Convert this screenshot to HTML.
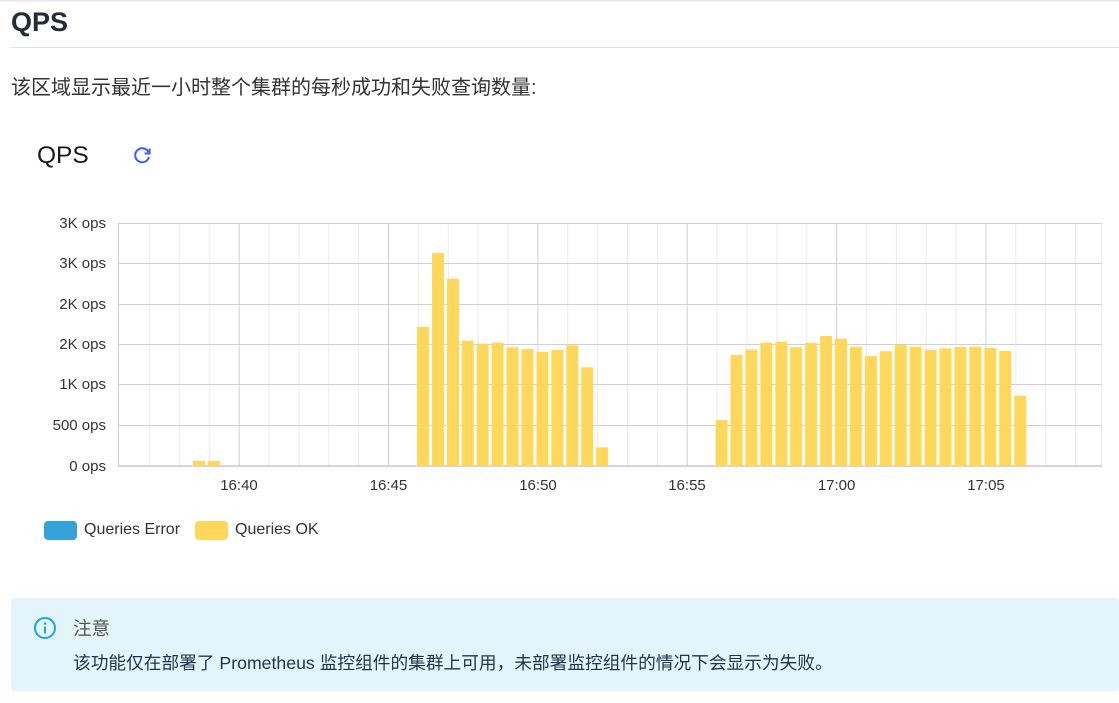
<!DOCTYPE html>
<html><head><meta charset="utf-8"><style>
body{margin:0;width:1119px;height:703px;overflow:hidden;background:#fff;font-family:"Liberation Sans","Noto Sans CJK SC",sans-serif;position:relative}
.a{position:absolute;white-space:nowrap}
</style></head><body>
<div class="a" style="left:0;top:0;width:1119px;height:3px;background:linear-gradient(#e6e6e6,#fff)"></div>
<div class="a" style="left:11px;top:4px;font-size:27px;font-weight:bold;color:#262b36;line-height:36px">QPS</div>
<div class="a" style="left:11px;top:47px;width:1108px;height:1px;background:#dde2ea"></div>
<div class="a" style="left:11px;top:75px;font-size:20px;color:#333;line-height:26px">该区域显示最近一小时整个集群的每秒成功和失败查询数量:</div>
<div class="a" style="left:37px;top:141px;font-size:24.5px;color:#1a1a1a;line-height:30px">QPS</div>
<svg class="a" style="left:131px;top:144px" width="22" height="22" viewBox="0 0 22 22"><path d="M17.5 8.2A7 7 0 1 0 18 13" fill="none" stroke="#3d5cfb" stroke-width="2"/><path d="M18.6 4.5v5h-5" fill="none" stroke="#3d5cfb" stroke-width="2"/></svg>
<svg class="a" style="left:0;top:200px" width="1119" height="300" viewBox="0 200 1119 300" font-family="Liberation Sans,sans-serif" font-size="15" fill="#333">
<g stroke="#ebebeb" stroke-width="1">
<line x1="149.5" y1="223" x2="149.5" y2="466"/><line x1="179.4" y1="223" x2="179.4" y2="466"/><line x1="209.3" y1="223" x2="209.3" y2="466"/>
<line x1="269" y1="223" x2="269" y2="466"/><line x1="298.9" y1="223" x2="298.9" y2="466"/><line x1="328.8" y1="223" x2="328.8" y2="466"/><line x1="358.6" y1="223" x2="358.6" y2="466"/>
<line x1="418.4" y1="223" x2="418.4" y2="466"/><line x1="448.3" y1="223" x2="448.3" y2="466"/><line x1="478.1" y1="223" x2="478.1" y2="466"/><line x1="508" y1="223" x2="508" y2="466"/>
<line x1="567.8" y1="223" x2="567.8" y2="466"/><line x1="597.6" y1="223" x2="597.6" y2="466"/><line x1="627.5" y1="223" x2="627.5" y2="466"/><line x1="657.4" y1="223" x2="657.4" y2="466"/>
<line x1="717.1" y1="223" x2="717.1" y2="466"/><line x1="747" y1="223" x2="747" y2="466"/><line x1="776.9" y1="223" x2="776.9" y2="466"/><line x1="806.7" y1="223" x2="806.7" y2="466"/>
<line x1="866.5" y1="223" x2="866.5" y2="466"/><line x1="896.4" y1="223" x2="896.4" y2="466"/><line x1="926.2" y1="223" x2="926.2" y2="466"/><line x1="956.1" y1="223" x2="956.1" y2="466"/>
<line x1="1015.9" y1="223" x2="1015.9" y2="466"/><line x1="1045.7" y1="223" x2="1045.7" y2="466"/><line x1="1075.6" y1="223" x2="1075.6" y2="466"/><line x1="1101.7" y1="223" x2="1101.7" y2="466"/>
</g>
<g stroke="#d0d0d0" stroke-width="1">
<line x1="239.1" y1="223" x2="239.1" y2="466"/><line x1="388.5" y1="223" x2="388.5" y2="466"/><line x1="537.9" y1="223" x2="537.9" y2="466"/><line x1="687.2" y1="223" x2="687.2" y2="466"/><line x1="836.6" y1="223" x2="836.6" y2="466"/><line x1="986" y1="223" x2="986" y2="466"/>
<line x1="118" y1="223.5" x2="1102" y2="223.5"/><line x1="118" y1="263.5" x2="1102" y2="263.5"/><line x1="118" y1="304.5" x2="1102" y2="304.5"/><line x1="118" y1="344.5" x2="1102" y2="344.5"/><line x1="118" y1="384.5" x2="1102" y2="384.5"/><line x1="118" y1="425.5" x2="1102" y2="425.5"/>
<line x1="118.5" y1="223" x2="118.5" y2="466"/>
</g>
<line x1="118" y1="466" x2="1102" y2="466" stroke="#c8c8c8" stroke-width="1.5"/>
<g fill="#ffd85b">
<rect x="193" y="461" width="12" height="5"/><rect x="207.9" y="461" width="12" height="5"/>
<rect x="417" y="327" width="12" height="139"/><rect x="432" y="253" width="12" height="213"/><rect x="447" y="278.7" width="12" height="187.3"/><rect x="461.7" y="340.7" width="12" height="125.3"/><rect x="476.7" y="343.7" width="12" height="122.3"/><rect x="491.6" y="342.7" width="12" height="123.3"/><rect x="506.5" y="347.3" width="12" height="118.7"/><rect x="521.5" y="349" width="12" height="117"/><rect x="536.4" y="352" width="12" height="114"/><rect x="551.3" y="350" width="12" height="116"/><rect x="566.3" y="345.3" width="12" height="120.7"/><rect x="581.2" y="367.3" width="12" height="98.7"/><rect x="596.1" y="447.3" width="12" height="18.7"/>
<rect x="715.6" y="420" width="12" height="46"/><rect x="730.5" y="355" width="12" height="111"/><rect x="745.4" y="349.7" width="12" height="116.3"/><rect x="760.3" y="342.7" width="12" height="123.3"/><rect x="775.3" y="341.7" width="12" height="124.3"/><rect x="790.2" y="347.3" width="12" height="118.7"/><rect x="805.1" y="343" width="12" height="123"/><rect x="820.1" y="336" width="12" height="130"/><rect x="835" y="338.7" width="12" height="127.3"/><rect x="849.9" y="346.7" width="12" height="119.3"/><rect x="864.9" y="356" width="12" height="110"/><rect x="879.8" y="351.3" width="12" height="114.7"/><rect x="894.7" y="344.7" width="12" height="121.3"/><rect x="909.6" y="346.7" width="12" height="119.3"/><rect x="924.6" y="350" width="12" height="116"/><rect x="939.5" y="348.3" width="12" height="117.7"/><rect x="954.4" y="347" width="12" height="119"/><rect x="969.4" y="346.7" width="12" height="119.3"/><rect x="984.3" y="348" width="12" height="118"/><rect x="999.2" y="351" width="12" height="115"/><rect x="1014.2" y="395.7" width="12" height="70.3"/>
</g>
<g text-anchor="end">
<text x="106" y="228">3K ops</text><text x="106" y="268">3K ops</text><text x="106" y="309">2K ops</text><text x="106" y="349">2K ops</text><text x="106" y="389">1K ops</text><text x="106" y="430">500 ops</text><text x="106" y="471">0 ops</text>
</g>
<g text-anchor="middle">
<text x="239" y="490">16:40</text><text x="388.5" y="490">16:45</text><text x="538" y="490">16:50</text><text x="687" y="490">16:55</text><text x="836.6" y="490">17:00</text><text x="986" y="490">17:05</text>
</g>
</svg>
<div class="a" style="left:44px;top:521px;width:33px;height:19px;background:#37a2da;border-radius:4px"></div>
<div class="a" style="left:84px;top:520px;font-size:16px;color:#333;line-height:20px">Queries Error</div>
<div class="a" style="left:195px;top:521px;width:33px;height:19px;background:#ffd85b;border-radius:4px"></div>
<div class="a" style="left:235px;top:520px;font-size:16px;color:#333;line-height:20px">Queries OK</div>
<div class="a" style="left:11px;top:598px;width:1108px;height:93px;background:#e3f4fb;border-radius:4px"></div>
<svg class="a" style="left:33px;top:616px" width="24" height="24" viewBox="0 0 24 24"><circle cx="12" cy="12" r="10" fill="none" stroke="#1ba5e8" stroke-width="2"/><rect x="11" y="10.5" width="2" height="7" fill="#1ba5e8"/><circle cx="12" cy="7.5" r="1.3" fill="#1ba5e8"/></svg>
<div class="a" style="left:73px;top:616px;font-size:18.5px;color:#555;line-height:26px">注意</div>
<div class="a" style="left:73px;top:650px;font-size:17.7px;color:#1f3448;line-height:26px">该功能仅在部署了 Prometheus 监控组件的集群上可用，未部署监控组件的情况下会显示为失败。</div>
</body></html>
